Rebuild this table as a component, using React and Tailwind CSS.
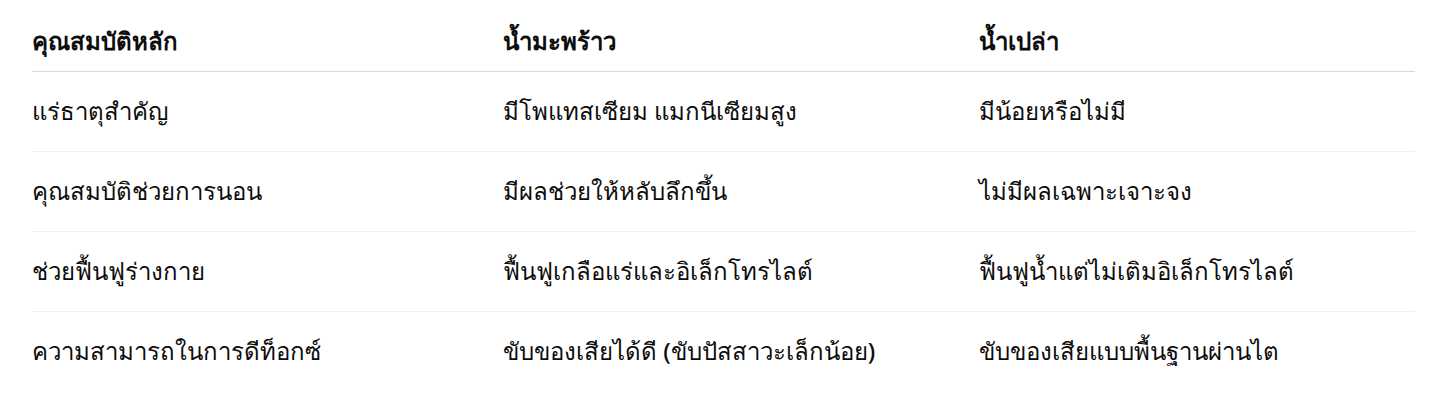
export default function App() {
  const headers = ['คุณสมบัติหลัก', 'น้ำมะพร้าว', 'น้ำเปล่า'];
  const rows = [
    ['แร่ธาตุสำคัญ', 'มีโพแทสเซียม แมกนีเซียมสูง', 'มีน้อยหรือไม่มี'],
    ['คุณสมบัติช่วยการนอน', 'มีผลช่วยให้หลับลึกขึ้น', 'ไม่มีผลเฉพาะเจาะจง'],
    ['ช่วยฟื้นฟูร่างกาย', 'ฟื้นฟูเกลือแร่และอิเล็กโทรไลต์', 'ฟื้นฟูน้ำแต่ไม่เติมอิเล็กโทรไลต์'],
    ['ความสามารถในการดีท็อกซ์', 'ขับของเสียได้ดี (ขับปัสสาวะเล็กน้อย)', 'ขับของเสียแบบพื้นฐานผ่านไต'],
  ];

  return (
    <div className="bg-white min-h-screen px-8 pt-3 text-[#0d0d0d] font-['Noto_Sans','Liberation_Sans',sans-serif]">
      <table className="w-[1383px] border-collapse text-left">
        <colgroup>
          <col className="w-[471px]" />
          <col className="w-[476px]" />
          <col className="w-[436px]" />
        </colgroup>
        <thead>
          <tr className="h-[59px] border-b border-[#d9d9d9]">
            {headers.map((h) => (
              <th key={h} className="p-0 align-middle text-[24px] font-bold">{h}</th>
            ))}
          </tr>
        </thead>
        <tbody>
          {rows.map((r, i) => (
            <tr key={i} className={`h-[80px] ${i < rows.length - 1 ? 'border-b border-[#efefef]' : ''}`}>
              {r.map((c, j) => (
                <td key={j} className="p-0 align-middle text-[24px] font-medium">{c}</td>
              ))}
            </tr>
          ))}
        </tbody>
      </table>
    </div>
  );
}
